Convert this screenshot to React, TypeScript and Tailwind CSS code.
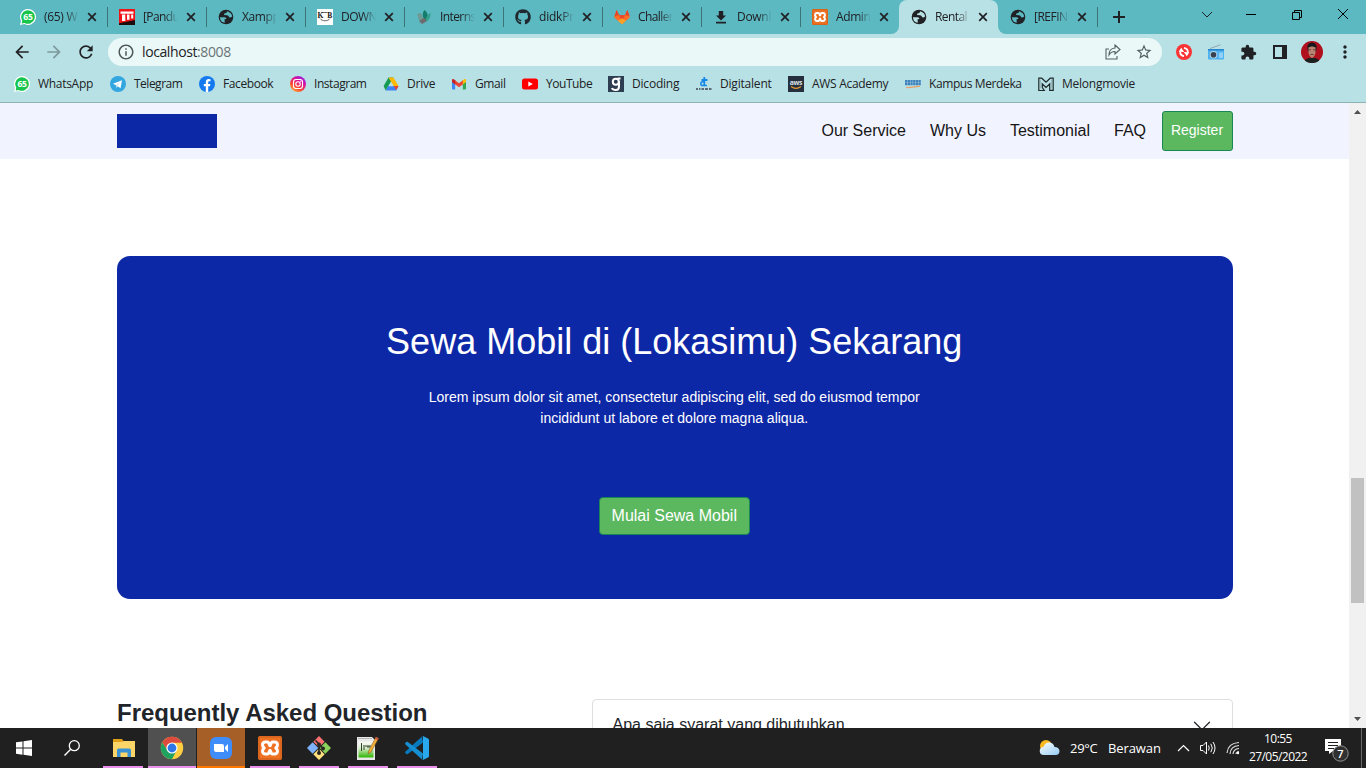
import type { ReactNode } from 'react';
import { FaGithub } from 'react-icons/fa';
import {
  MdArrowBack,
  MdArrowForward,
  MdRefresh,
  MdInfoOutline,
  MdStarBorder,
  MdExtension,
  MdMoreVert,
} from 'react-icons/md';

function Svg({ box = 16, size = 16, children }: { box?: number; size?: number; children: ReactNode }) {
  return (
    <svg width={size} height={size} viewBox={`0 0 ${box} ${box}`} fill="none" className="block shrink-0">
      {children}
    </svg>
  );
}

const WhatsApp = () => (
  <Svg>
    <path d="M8 0a8 8 0 1 1-3.700 15.100L0 16l1-4.200A8 8 0 0 1 8 0Z" fill="#fff" />
    <path d="M8 1.200a6.800 6.800 0 1 1-3.400 12.700L1.700 14.400l.6-2.800A6.800 6.800 0 0 1 8 1.200Z" fill="#17c44c" />
    <text x="8" y="11" textAnchor="middle" fontSize="8.500" fontWeight="700" fontFamily="Open Sans, sans-serif" fill="#fff">65</text>
  </Svg>
);

const Globe = () => (
  <Svg>
    <circle cx="8" cy="8" r="7.300" fill="#202124" />
    <path d="M9.300 2.200Q8.600 4.600 6.300 4.500L6 6l3.200.2q1.800.4 1.900 2.100l1.500.3 1.600-1.200Q13.700 3.700 9.300 2.200Z" className="fill-current" />
    <path d="M1.900 8.200h4.600q1.900.2 1.900 1.900l-1.900.2.300 3.500Q2.400 13.300 1.900 8.200Z" className="fill-current" />
  </Svg>
);

const RedLogo = () => (
  <Svg>
    <path d="M0 0h16v16H0z" fill="#f01318" />
    <path d="M0 14.200 16 11v5H0Z" fill="#1d0c0c" />
    <path d="M1.500 2.500h13v2.300h-13zM3 5.500h3.300v6.500H3zM8 5.500h2.500v5.200H8zM12.200 5.500h2v4h-2z" fill="#fff" />
  </Svg>
);

const KbLogo = () => (
  <Svg>
    <path d="M0 0h16v16H0z" fill="#fff" />
    <path d="M4.500 3.500h6M3 9.500c2 3 8 3 10 0" stroke="#444" strokeWidth=".8" />
    <text x="0.500" y="8.500" fontSize="7.500" fontWeight="700" fontFamily="Liberation Serif, serif" fill="#111">K</text>
    <text x="10.300" y="8.500" fontSize="7.500" fontWeight="700" fontFamily="Liberation Serif, serif" fill="#111">B</text>
  </Svg>
);

const Leaf = () => (
  <Svg>
    <path d="m1 5 4-1 3 7-5 0Z" fill="#6d9a93" />
    <path d="M8.500 1c4 3 4 7 1.500 11C6 9 6 4 8.500 1Z" fill="#147d6c" />
    <path d="M14.500 3.500c0 5-1 8-5 9 0-4 2-6 5-9Z" fill="#33a18b" />
    <path d="m3 12 5-3 3 3-5 3Z" fill="#6f6a6c" />
  </Svg>
);

const Gitlab = () => (
  <Svg>
    <path d="M2.700 1 0 8.300 8 15.300l8-7L13.300 1l-2.200 5H4.900Z" fill="#fc6d26" />
    <path d="M2.700 1 .5 7 5 6ZM13.300 1l2.200 6L11 6Z" fill="#e24329" />
    <path d="M4.900 6h6.200L8 13Z" fill="#e9482a" />
    <path d="m4 11.800 4-2.500 4 2.500-4 3.500Z" fill="#fca326" />
  </Svg>
);

const Download = () => (
  <Svg>
    <path d="M5.800 2h4.400v4.500H13l-5 5-5-5h2.800ZM3 12.700h10v1.700H3Z" fill="#202124" />
  </Svg>
);

const Xampp = ({ size = 16 }: { size?: number }) => (
  <Svg box={24} size={size}>
    <rect width="24" height="24" rx="2" fill="#ef7223" />
    <rect x="1" y="1" width="22" height="22" rx="1.500" stroke="#c95b18" />
    <path
      d="M7.500 6h2C11.500 6 11 9.800 12 9.800S12.500 6 14.500 6h2c3.700 0 3.700 4.200 1.300 6 2.400 1.800 2.400 6-1.300 6h-2c-2 0-1.500-3.800-2.500-3.800S11.500 18 9.500 18h-2c-3.700 0-3.700-4.200-1.300-6C3.800 10.200 3.800 6 7.500 6Z"
      stroke="#fff"
      strokeWidth="3"
      strokeLinejoin="round"
    />
  </Svg>
);

const Telegram = () => (
  <Svg>
    <circle cx="8" cy="8" r="8" fill="#32a6de" />
    <path d="m3 7.800 9-3.500-1.500 8-2.700-2-1.300 1.400-.5-2.500Z" fill="#fff" />
    <path d="m6 9.200 4.500-3.300-3.500 4-.5 1.800Z" fill="#b8d9e9" />
  </Svg>
);

const Facebook = () => (
  <Svg>
    <circle cx="8" cy="8" r="8" fill="#1479ee" />
    <path d="M6.800 16v-5.700h-2V8h2V6.300c0-2.100 1.200-3.200 3-3.200l1.700.15v2h-1c-1 0-1.300.6-1.300 1.200V8h2.200l-.4 2.300H9.200V16Z" fill="#fff" />
  </Svg>
);

const Instagram = () => (
  <Svg>
    <defs>
      <linearGradient id="ig" x1="1" y1="16" x2="12" y2="0" gradientUnits="userSpaceOnUse">
        <stop stopColor="#ffc83d" />
        <stop offset=".4" stopColor="#fb4034" />
        <stop offset=".7" stopColor="#db139d" />
        <stop offset="1" stopColor="#9a1ee5" />
      </linearGradient>
    </defs>
    <circle cx="8" cy="8" r="8" fill="url(#ig)" />
    <rect x="3.500" y="3.500" width="9" height="9" rx="2.500" stroke="#fff" strokeWidth="1.100" />
    <circle cx="8" cy="8" r="2.200" stroke="#fff" strokeWidth="1.100" />
    <circle cx="10.700" cy="5.300" r=".6" fill="#fff" />
  </Svg>
);

const Drive = () => (
  <Svg>
    <path d="M5.500 1.500h5L5.200 10.600l-2.500 4L.6 10Z" fill="#159b52" />
    <path d="M5.500 1.500h5l5 8.600h-5Z" fill="#ffba00" />
    <path d="M5.200 10h10.300l-2.300 4.500H2.700Z" fill="#3f82f4" />
    <path d="M15.500 10h-4.700l2.500 4.300Z" fill="#ea4335" />
    <path d="m8 5.700-2.600 4.500h5.200Z" fill="#b8e1e5" />
  </Svg>
);

const Gmail = () => (
  <Svg>
    <path d="M1 4.500h3.200V13.500H2q-1 0-1-1Z" fill="#4285f4" />
    <path d="M15 4.500h-3.200v9H14q1 0 1-1Z" fill="#34a853" />
    <path d="m4 4.300 4 3 4-3v4l-4 3-4-3Z" fill="#ea4335" />
    <path d="M11.800 4.400 13 3.300q2-1 2 1V6l-3.200 2.400Z" fill="#fbbc04" />
    <path d="M4.200 4.400 3 3.300q-2-1-2 1V6l3.200 2.400Z" fill="#c5221f" />
  </Svg>
);

const YouTube = () => (
  <Svg>
    <rect y="2.500" width="16" height="11" rx="2.500" fill="#f00" />
    <path d="M6.300 5.500v5l4.500-2.500Z" fill="#fff" />
  </Svg>
);

const Dicoding = () => (
  <Svg>
    <path d="M0 0h16v16H0z" fill="#2d3e50" />
    <circle cx="7.800" cy="5.800" r="3" stroke="#fff" strokeWidth="2" />
    <path d="M9.500 2.500h3M11 5v5.500q0 3.500-3.200 3.500T4 12" stroke="#fff" strokeWidth="2" />
  </Svg>
);

const Digitalent = () => (
  <Svg>
    <path d="M8.300 1v9M5.500 4h6" stroke="#1688e5" strokeWidth="1.800" />
    <path d="M11 9.500H6.800Q4.800 9.500 4.800 7.700T6.800 5.800h1.500" stroke="#1688e5" strokeWidth="1.500" />
    <path d="M0 13h2M3 13h1.500M5.500 13H8M9 13h3M13 13h2.500" stroke="#5a6b75" strokeWidth="1.800" />
  </Svg>
);

const Aws = () => (
  <Svg>
    <path d="M0 0h16v16H0z" fill="#252f3e" />
    <text x="8" y="8.500" textAnchor="middle" fontSize="6.800" fontWeight="700" fontFamily="Open Sans, sans-serif" fill="#dfe3e8">aws</text>
    <path d="M3 10.500c3 2.200 7 2.200 10 0" stroke="#ea9a2f" strokeWidth="1.100" />
  </Svg>
);

const Kampus = () => (
  <Svg>
    <path d="M0 5.200h16M0 8h16" stroke="#3f83bd" strokeWidth="2.400" strokeDasharray="2.300 .4" />
    <path d="M1 11.700q7-.2 14-1.500" stroke="#e9a068" strokeWidth="1.300" />
  </Svg>
);

const Melong = () => (
  <Svg>
    <path d="M.8 2.200h3L8 6.200l4.200-4h3v12.200h-3.500V8L8 11.500 4.300 8v3.500l2 3H.8Z" stroke="#202a2c" strokeWidth="1.200" />
    <path d="M2.500 3.500v9M13.500 3.500v9" stroke="#87a5a8" strokeWidth=".6" />
  </Svg>
);

const tabs: { title: string; icon: ReactNode; active?: boolean; divider?: boolean; spacing?: string }[] = [
  { title: '(65) W', icon: <WhatsApp />, divider: true },
  { title: '[Pandu', icon: <RedLogo />, divider: true, spacing: 'tracking-[-0.6px]' },
  { title: 'Xampp', icon: <Globe />, divider: true, spacing: 'tracking-[-0.4px]' },
  { title: 'DOWN', icon: <KbLogo />, divider: true, spacing: 'tracking-[-0.5px]' },
  { title: 'Interns', icon: <Leaf />, divider: true, spacing: 'tracking-[-0.6px]' },
  { title: 'didkPr', icon: <FaGithub className="size-4 text-[#202930]" />, divider: true, spacing: 'tracking-[-0.2px]' },
  { title: 'Challer', icon: <Gitlab />, divider: true, spacing: 'tracking-[-0.6px]' },
  { title: 'Downl', icon: <Download />, divider: true, spacing: 'tracking-[-0.3px]' },
  { title: 'Admin', icon: <Xampp />, spacing: 'tracking-[-0.4px]' },
  { title: 'Rental', icon: <Globe />, active: true, spacing: 'tracking-[-0.6px]' },
  { title: '[REFIN', icon: <Globe />, divider: true, spacing: 'tracking-[-0.5px]' },
];

const bookmarks: { title: string; icon: ReactNode; width: string }[] = [
  { title: 'WhatsApp', icon: <WhatsApp />, width: 'w-[96px] tracking-[-0.3px]' },
  { title: 'Telegram', icon: <Telegram />, width: 'w-[89px] tracking-[-0.5px]' },
  { title: 'Facebook', icon: <Facebook />, width: 'w-[91px] tracking-[-0.4px]' },
  { title: 'Instagram', icon: <Instagram />, width: 'w-[93px] tracking-[-0.45px]' },
  { title: 'Drive', icon: <Drive />, width: 'w-[68px] tracking-[-0.2px]' },
  { title: 'Gmail', icon: <Gmail />, width: 'w-[71px] tracking-[-0.4px]' },
  { title: 'YouTube', icon: <YouTube />, width: 'w-[86px] tracking-[-0.45px]' },
  { title: 'Dicoding', icon: <Dicoding />, width: 'w-[88px] tracking-[-0.2px]' },
  { title: 'Digitalent', icon: <Digitalent />, width: 'w-[92px] tracking-[-0.2px]' },
  { title: 'AWS Academy', icon: <Aws />, width: 'w-[117px] tracking-[-0.3px]' },
  { title: 'Kampus Merdeka', icon: <Kampus />, width: 'w-[133px] tracking-[-0.4px]' },
  { title: 'Melongmovie', icon: <Melong />, width: 'w-[110px] tracking-[-0.25px]' },
];

function Tab({ title, icon, active, divider, spacing = 'tracking-[-0.3px]' }: (typeof tabs)[number]) {
  return (
    <div className={`relative flex h-[34px] w-[99px] shrink-0 items-center pl-3 ${active ? 'rounded-t-lg bg-[#b8e1e5] text-[#b8e1e5]' : 'text-[#5cb8c1]'}`}>
      {active && (
        <>
          <svg className="absolute bottom-0 -left-2" width="8" height="8"><path d="M8 0v8H0a8 8 0 0 0 8-8Z" fill="#b8e1e5" /></svg>
          <svg className="absolute -right-2 bottom-0" width="8" height="8"><path d="M0 0v8h8a8 8 0 0 1-8-8Z" fill="#b8e1e5" /></svg>
        </>
      )}
      <span className="w-4 shrink-0">{icon}</span>
      <span className={`ml-2 w-[35px] shrink-0 text-[12px] whitespace-nowrap text-[#202124] [mask-image:linear-gradient(to_right,black_62%,transparent)] ${spacing}`}>
        {title}
      </span>
      <svg className="ml-2 shrink-0" width="10" height="10"><path d="m1.200 1.200 7.600 7.600m0-7.600L1.200 8.800" stroke="#202124" strokeWidth="1.700" /></svg>
      {divider && <span className="absolute top-[7px] -right-px h-5 w-px bg-[#3c7378]" />}
    </div>
  );
}

function BrowserChrome() {
  return (
    <header className="h-[103px] border-b border-[#8fb2b5] bg-[#b8e1e5] font-['Open_Sans','Noto_Sans',sans-serif] text-[#202124]">
      <div className="flex h-[34px] bg-[#5cb8c1] pl-2">
        {tabs.map((tab) => (
          <Tab key={tab.title} {...tab} />
        ))}
        <svg className="mt-[11px] ml-4" width="12" height="12"><path d="M6 0v12M0 6h12" stroke="#202124" strokeWidth="2" /></svg>
        <div className="ml-auto flex h-[29px] items-center">
          <svg className="mr-8" width="12" height="12"><path d="m1 3 5 5 5-5" stroke="#202124" fill="none" /></svg>
          <svg className="mr-[34px]" width="12" height="12"><path d="M1 5.500h10" stroke="#000" /></svg>
          <svg className="mr-[34px]" width="12" height="12"><path d="M1.500 3.500h7v7h-7zM3.500 3.500v-2h7v7h-2" stroke="#000" fill="none" /></svg>
          <svg className="mr-[17px]" width="12" height="12"><path d="m1 0 10 10M11 0 1 10" stroke="#000" /></svg>
        </div>
      </div>
      <div className="flex h-9 items-center pl-3">
        <MdArrowBack className="size-5" />
        <MdArrowForward className="ml-3 size-5 text-[#7d999c]" />
        <MdRefresh className="ml-3 size-5" />
        <div className="ml-3 flex h-7 w-[1054px] items-center rounded-full bg-[#ebf8f8] pr-[9px] pl-[9px]">
          <MdInfoOutline className="size-[18px] text-[#4d5658]" />
          <span className="ml-[7px] text-[14px] leading-5 tracking-[-0.4px]">localhost<span className="text-[#6a7375]">:8008</span></span>
          <svg className="ml-auto" width="16" height="16" viewBox="0 0 16 16" fill="none" stroke="#535f61" strokeWidth="1.100">
            <path d="M4 5H1v10h11v-3" />
            <path d="m10 1 5 4.500L10 10V7.500Q6 7.500 4 11q0-6.500 6-7Z" />
          </svg>
          <MdStarBorder className="ml-[14px] size-[18px] text-[#535f61]" />
        </div>
        <div className="ml-[14px] flex items-center">
          <Svg>
            <circle cx="8" cy="8" r="8" fill="#fa3434" />
            <path d="M8 12.200Q4 11.500 4.200 7.500M8 3.800q4 .7 3.800 4.700" stroke="#fff" strokeWidth="1.800" />
            <path d="m2.700 7.800 2.500-4 3 4.200ZM13.300 8.200l-2.500 4-3-4.200Z" fill="#fff" />
          </Svg>
          <span className="ml-4"><Svg>
            <path d="M2 4.500 12.500.8" stroke="#91a8b0" />
            <rect y="5" width="16" height="10.500" rx="1" fill="#4fb2f0" />
            <path d="M0 5h16v1.500H0z" fill="#2784ce" />
            <circle cx="5.500" cy="10.800" r="3.800" fill="#b4d6e8" />
            <circle cx="5.500" cy="10.800" r="2.800" fill="#37414f" />
            <path d="M12 8.500v5.500M14 8.500v5.500" stroke="#d2f2ff" />
          </Svg></span>
          <MdExtension className="ml-4 size-[17px]" />
          <svg className="ml-4" width="14" height="14"><path d="M1 1h12v12H1z" stroke="#202124" strokeWidth="2" fill="none" /><path d="M9 1h4v12H9z" fill="#202124" /></svg>
          <svg className="ml-3.5" width="22" height="22">
            <defs><clipPath id="avatar"><circle cx="11" cy="11" r="11" /></clipPath></defs>
            <g clipPath="url(#avatar)">
              <path d="M0 0h22v22H0z" fill="#b00f1d" />
              <path d="M3 22q0-4 5-5h6q5 1 5 5Z" fill="#182020" />
              <path d="M6.500 8q-1-6 4.500-6.500Q16.500 2 15.500 8l-1 3h-7Z" fill="#17191a" />
              <path d="M7.500 6.500q3.500-2 7 0V12q-1 4-3.500 5-2.500-1-3.500-5Z" fill="#b78472" />
              <path d="M8 8.800h2M12 8.800h2M9.500 13.500h3" stroke="#684039" />
            </g>
          </svg>
          <MdMoreVert className="ml-3 size-5" />
        </div>
      </div>
      <nav className="flex h-7 items-center pl-3.5 text-[12px]">
        {bookmarks.map((b) => (
          <div key={b.title} className={`flex shrink-0 items-center gap-2 whitespace-nowrap ${b.width}`}>
            {b.icon}
            <span>{b.title}</span>
          </div>
        ))}
      </nav>
    </header>
  );
}

function Page() {
  return (
    <div className="h-full min-w-0 flex-1 overflow-hidden bg-white font-['Liberation_Sans',Arial,sans-serif] text-[16px] text-[#212529]">
      <div className="flex h-14 items-center bg-[#f1f3ff] pr-[116px] pl-[117px]">
        <div className="h-[34px] w-[100px] bg-[#0d28a6]" />
        <nav className="ml-auto flex gap-6 pr-4 text-[#151515]">
          <a>Our Service</a>
          <a>Why Us</a>
          <a>Testimonial</a>
          <a>FAQ</a>
        </nav>
        <button className="h-10 w-[71px] rounded-[3px] border border-[#198754] bg-[#5cb85f] pr-px pb-0.5 text-[14px] text-white">Register</button>
      </div>
      <section className="mt-[97px] mr-[116px] ml-[117px] flex h-[343px] flex-col items-center rounded-[13px] bg-[#0d28a6] pr-[1.5px] text-white">
        <h1 className="mt-[64px] text-[36px] leading-[43px] whitespace-nowrap">Sewa Mobil di (Lokasimu) Sekarang</h1>
        <p className="mt-[24px] text-center text-[14px] leading-[21px]">
          Lorem ipsum dolor sit amet, consectetur adipiscing elit, sed do eiusmod tempor
          <br />
          incididunt ut labore et dolore magna aliqua.
        </p>
        <button className="mt-[68px] h-[38px] w-[151px] rounded-[4px] border border-[#198754] bg-[#5cb85f] pb-px text-[16px]">Mulai Sewa Mobil</button>
      </section>
      <section className="mt-[100px] mr-[116px] ml-[117px] flex justify-between">
        <h2 className="text-[24px] leading-[27px] font-bold tracking-[-0.03px]">Frequently Asked Question</h2>
        <div className="flex h-14 w-[641px] justify-between rounded-t-[4px] border border-[#dfdfdf] pt-[13px] pr-5 pl-[19.500px]">
          <span className="leading-6">Apa saja syarat yang dibutuhkan</span>
          <svg className="mt-[3px]" width="20" height="20" viewBox="0 0 16 16"><path d="m2 5 6 6 6-6" stroke="#212529" fill="none" strokeLinecap="round" strokeLinejoin="round" /></svg>
        </div>
      </section>
    </div>
  );
}

function Scrollbar() {
  return (
    <div className="flex h-full w-[17px] flex-col items-center bg-[#f1f1f1]">
      <svg width="17" height="17"><path d="M5 11h7L8.500 7Z" fill="#505050" /></svg>
      <div className="mt-[358px] h-[125px] w-[13px] bg-[#c1c1c1]" />
      <svg className="mt-auto" width="17" height="17"><path d="M5 6h7l-3.500 4Z" fill="#505050" /></svg>
    </div>
  );
}

const Explorer = () => (
  <Svg box={24} size={24}>
    <path d="M1 3h9l1.500 2H22v4H1z" fill="#dfa018" />
    <path d="M1 6h9l2-1h11v16H1z" fill="#fbd567" />
    <path d="M5 14q0-1.500 1.500-1.500h11q1.500 0 1.500 1.500v7h-3.500v-4.500h-7V21H5Z" fill="#3a92d5" />
  </Svg>
);

const Chrome = () => (
  <Svg box={24} size={24}>
    <circle cx="12" cy="12" r="11.200" fill="#ffcd40" />
    <path d="M2.300 6.400A11.200 11.200 0 0 1 21.700 6.400L21.700 6.800H12L7.500 14.600Z" fill="#dd4b3e" />
    <path d="M2.300 6.400A11.200 11.200 0 0 0 12 23.200L16.500 14.600H7.500Z" fill="#1da260" />
    <circle cx="12" cy="12" r="5.600" fill="#fff" />
    <circle cx="12" cy="12" r="4.400" fill="#2e76e8" />
  </Svg>
);

const Zoom = () => (
  <Svg box={24} size={24}>
    <rect x="1" y="1" width="22" height="22" rx="6" fill="#3f8cfb" />
    <path d="M5 8h8q2 0 2 2v6H7q-2 0-2-2ZM16 11l3-3v8l-3-3Z" fill="#fff" />
  </Svg>
);

const Git = () => (
  <Svg box={24} size={24}>
    <g transform="rotate(45 12 12)">
      <rect x="3.500" y="3.500" width="8" height="8" fill="#f76f70" />
      <rect x="12.500" y="3.500" width="8" height="8" fill="#8bd15c" />
      <rect x="3.500" y="12.500" width="8" height="8" fill="#80b1fb" />
      <rect x="12.500" y="12.500" width="8" height="8" fill="#ffe17d" />
    </g>
    <path d="M8.500 4.500 12 8v9M12 8.500l4 4" stroke="#282622" strokeWidth="1.700" />
    <circle cx="12" cy="8.500" r="2" fill="#282622" />
    <circle cx="16" cy="12.500" r="2" fill="#282622" />
    <circle cx="12" cy="17" r="2" fill="#282622" />
  </Svg>
);

const Notepad = () => (
  <Svg box={24} size={24}>
    <defs><linearGradient id="note" x1="0" y1="7" x2="0" y2="21" gradientUnits="userSpaceOnUse"><stop stopColor="#f4f8f0" /><stop offset=".35" stopColor="#dcefcf" /><stop offset="1" stopColor="#35b80b" /></linearGradient></defs>
    <path d="M1 1h15l3 3v20H1z" fill="#e8e8e8" />
    <path d="M2.500 5.500h15v16h-15z" fill="url(#note)" />
    <path d="M2.500 2.500h13" stroke="#858585" strokeDasharray="1 1" />
    <path d="M5.500 7v8M8 9v5M9 10h6M11 11h3" stroke="#30432b" />
    <path d="m12 18 1-4L20 1l2.500 1.500L15 16Z" fill="#efae35" stroke="#7b5220" strokeWidth=".5" />
    <path d="m20 1 2.500 1.500-1 1.700-2.500-1.500Z" fill="#ce5149" />
  </Svg>
);

const VsCode = () => (
  <Svg box={24} size={24}>
    <path d="M18 6.500 2.500 18.200q-.7.300-1.200-.2L.3 17q-.5-.8.200-1.400L17 .4Z" fill="#0879bd" />
    <path d="M18 17.500 2.500 5.800q-.7-.3-1.200.2L.3 7q-.5.8.2 1.400L17 23.600Z" fill="#168ed2" />
    <path d="M17 .4q.7-.6 1.500-.2l4.500 2.200q1 .5 1 1.600v16q0 1.100-1 1.600l-4.500 2.200q-.8.400-1.500-.2 1 .5 1-1V1.400q0-1.500-1-1Z" fill="#29a8ee" />
  </Svg>
);

const apps: { name: string; icon: ReactNode; look: string; bar: string }[] = [
  { name: 'explorer', icon: <Explorer />, look: 'w-[49px]', bar: 'left-[4px] w-10 bg-[#eb91eb]' },
  { name: 'chrome', icon: <Chrome />, look: 'w-12 bg-[#505050]', bar: 'left-0 w-12 bg-[#eb91eb]' },
  { name: 'zoom', icon: <Zoom />, look: 'ml-px w-12 bg-[#a75f28]', bar: 'left-0 w-12 bg-[#ff7900]' },
  { name: 'xampp', icon: <Xampp size={24} />, look: 'ml-px w-12', bar: 'left-1 w-10 bg-[#eb91eb]' },
  { name: 'git', icon: <Git />, look: 'ml-px w-12', bar: 'left-1 w-10 bg-[#eb91eb]' },
  { name: 'notepad', icon: <Notepad />, look: 'ml-px w-12', bar: 'left-1 w-10 bg-[#eb91eb]' },
  { name: 'vscode', icon: <VsCode />, look: 'ml-px w-12', bar: 'left-1 w-10 bg-[#eb91eb]' },
];

function Taskbar() {
  return (
    <footer className="flex h-10 bg-[#202020] font-['Open_Sans','Noto_Sans',sans-serif] text-white">
      <div className="flex w-12 items-center justify-center">
        <Svg><path d="M0 2.300 6.500 1.400v6.200H0ZM7.500 1.200 16 0v7.600H7.500ZM0 8.500h6.500v6.200L0 13.800ZM7.500 8.500H16V16l-8.500-1.200Z" fill="#fff" /></Svg>
      </div>
      <div className="flex w-[51px] items-center justify-center pr-[3px]">
        <Svg><circle cx="10.300" cy="5.700" r="5" stroke="#fff" strokeWidth="1.300" /><path d="M6.700 9.300.5 15.500" stroke="#fff" strokeWidth="1.400" /></Svg>
      </div>
      {apps.map((a) => (
        <div key={a.name} className={`relative flex shrink-0 items-center justify-center ${a.look}`}>
          {a.icon}
          <span className={`absolute bottom-0 h-0.5 ${a.bar}`} />
        </div>
      ))}
      <div className="ml-auto flex items-center">
        <svg width="22" height="18" viewBox="0 0 22 18">
          <defs><linearGradient id="cloud" gradientUnits="userSpaceOnUse" x1="6" y1="3" x2="14" y2="18"><stop stopColor="#f2f9fd" /><stop offset="1" stopColor="#9ccff4" /></linearGradient></defs>
          <circle cx="7" cy="7" r="6" fill="#fbb91f" />
          <path d="M5 16a4 4 0 0 1-.5-8Q6 3 10.500 3.500q4 .3 5 4.500Q20 8 20.500 12q0 4-4 4Z" fill="url(#cloud)" />
        </svg>
        <span className="mt-0.5 ml-[9px] w-[38px] text-[13px] tracking-[-0.3px]">29°C</span>
        <span className="mt-0.5 w-[69px] text-[13px] tracking-[-0.1px]">Berawan</span>
        <svg width="13" height="8"><path d="m1 7 5.500-5.500L12 7" stroke="#fff" strokeWidth="1.200" fill="none" /></svg>
        <svg className="ml-[9px]" width="18" height="16" fill="none" stroke="#fff"><path d="M1.500 5.500H4L7.500 2v12L4 10.500H1.500ZM9.500 5.500q1.500 2.500 0 5M11.800 3.800q3 4.200 0 8.400M14 2q4 6 0 12" /></svg>
        <svg className="ml-[9px]" width="14" height="16" fill="none" stroke="#ddd" strokeWidth="1.200">
          <path d="M1 13Q2 3 13 2.500M4 14Q4.500 6 13 5.500M7 14q.5-5 6-5.500M10 14q.3-2.300 3-2.500" />
          <circle cx="12" cy="13" r="1.200" fill="#fff" stroke="none" />
        </svg>
        <div className="ml-2 w-[60px] text-center text-[12px] leading-[18px] tracking-[-0.55px] whitespace-nowrap">
          <div>10:55</div>
          <div>27/05/2022</div>
        </div>
        <svg className="mt-1 mr-[11px] ml-4" width="26" height="24">
          <path d="M1 1h16v12H9l-4 3v-3H1Z" fill="#fff" />
          <path d="M4 4.500h10M4 7.500h10M4 10.500h6" stroke="#202020" />
          <circle cx="16.500" cy="15.500" r="7.700" fill="#303030" stroke="#929292" />
          <text x="16.500" y="19.500" textAnchor="middle" fontSize="11" fontWeight="600" fill="#fff">7</text>
        </svg>
        <div className="mr-1 h-10 w-px bg-[#686868]" />
      </div>
    </footer>
  );
}

export default function App() {
  return (
    <div className="flex h-[768px] w-[1366px] flex-col overflow-hidden">
      <BrowserChrome />
      <main className="flex h-[625px]">
        <Page />
        <Scrollbar />
      </main>
      <Taskbar />
    </div>
  );
}
